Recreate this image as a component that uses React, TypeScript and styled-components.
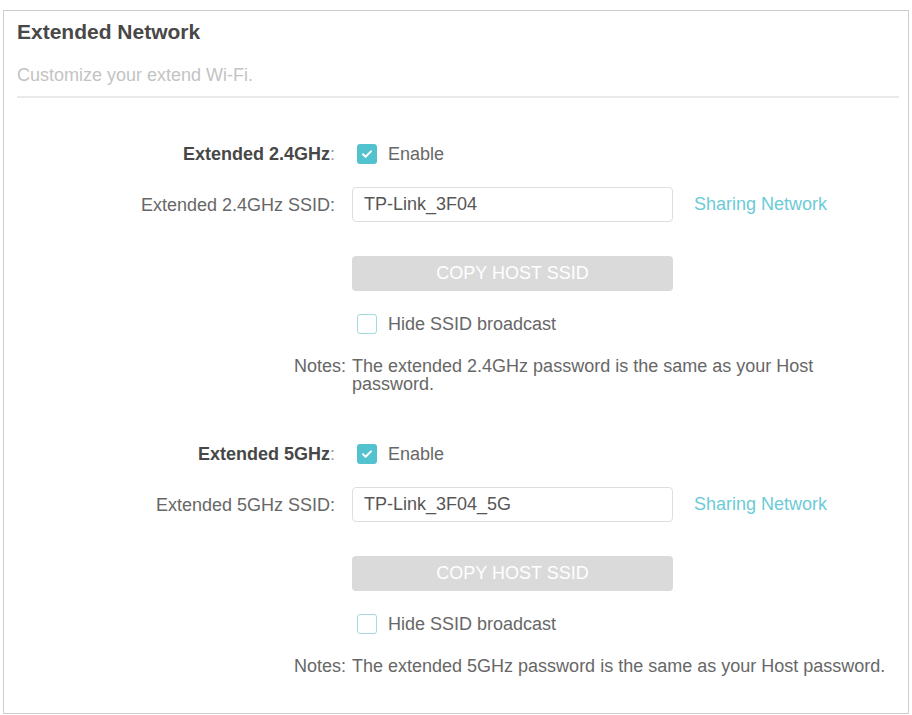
import React from "react";
import styled, { createGlobalStyle } from "styled-components";

const GlobalStyle = createGlobalStyle`
  html, body {
    margin: 0;
    padding: 0;
    background: #fff;
  }
  body {
    font-family: "Liberation Sans", Arial, sans-serif;
  }
`;

const Page = styled.div`
  padding: 10px 4px 1px 3px;
`;

const Panel = styled.section`
  box-sizing: border-box;
  width: 906px;
  height: 704px;
  border: 1px solid #cfcfcf;
  padding: 9px 9px 0 13px;
  background: #fff;
`;

const Title = styled.h1`
  margin: 0;
  font-size: 21px;
  line-height: 24px;
  font-weight: 700;
  color: #484848;
`;

const Subtitle = styled.p`
  margin: 20px 0 0;
  font-size: 18px;
  line-height: 22px;
  color: #c3c3c3;
`;

const Divider = styled.hr`
  margin: 10px 0 0;
  height: 2px;
  border: none;
  background: #e9e9e9;
`;

const Section = styled.div`
  display: flex;
  flex-direction: column;
`;

const Row = styled.div<{ $top: number; $start?: boolean }>`
  display: grid;
  grid-template-columns: 318px 1fr;
  column-gap: 17px;
  align-items: ${(p) => (p.$start ? "start" : "center")};
  margin-top: ${(p) => p.$top}px;
`;

const Label = styled.div<{ $bold?: boolean; $shift?: number }>`
  text-align: right;
  font-size: 18px;
  line-height: 18px;
  color: ${(p) => (p.$bold ? "#474747" : "#676767")};
  font-weight: ${(p) => (p.$bold ? 700 : 400)};
  margin-right: ${(p) => -(p.$shift ?? 0)}px;

  & span {
    font-weight: 400;
    color: #9a9a9a;
  }
`;

const Control = styled.div`
  display: flex;
  align-items: center;
`;

const Box = styled.span<{ $checked?: boolean }>`
  box-sizing: border-box;
  display: inline-flex;
  align-items: center;
  justify-content: center;
  width: 20px;
  height: 20px;
  margin-left: 5px;
  border-radius: 3px;
  background: ${(p) => (p.$checked ? "#52c2cf" : "#fff")};
  border: ${(p) => (p.$checked ? "none" : "1.5px solid #a3d9df")};
`;

const OptionText = styled.span`
  margin-left: 11px;
  font-size: 18px;
  line-height: 20px;
  color: #676767;
`;

const TextInput = styled.input`
  box-sizing: border-box;
  width: 321px;
  height: 35px;
  margin: 0;
  padding: 0 11px;
  border: 1px solid #dedede;
  border-radius: 4px;
  font-family: inherit;
  font-size: 18px;
  color: #565656;
  background: #fff;
  outline: none;
`;

const LinkText = styled.a`
  margin-left: 21px;
  font-size: 18px;
  color: #6ccbd6;
  text-decoration: none;
  cursor: pointer;
`;

const CopyButton = styled.button`
  width: 321px;
  height: 35px;
  border: none;
  border-radius: 4px;
  background: #dadada;
  color: #fff;
  font-family: inherit;
  font-size: 18px;
  cursor: default;
`;

const NoteText = styled.p`
  margin: 0;
  max-width: 540px;
  font-size: 18px;
  line-height: 18px;
  color: #676767;
`;

function Checkbox({ checked }: { checked?: boolean }) {
  return (
    <Box $checked={checked}>
      {checked && (
        <svg width="14" height="14" viewBox="0 0 14 14">
          <path
            d="M3 7.3l2.6 2.5L11 4.4"
            fill="none"
            stroke="#fff"
            strokeWidth="2"
            strokeLinecap="round"
            strokeLinejoin="round"
          />
        </svg>
      )}
    </Box>
  );
}

type BandProps = {
  band: string;
  ssid: string;
  note: string;
  top: number;
};

function BandSection({ band, ssid, note, top }: BandProps) {
  return (
    <Section>
      <Row $top={top}>
        <Label $bold>
          Extended {band}
          <span>:</span>
        </Label>
        <Control>
          <Checkbox checked />
          <OptionText>Enable</OptionText>
        </Control>
      </Row>
      <Row $top={23}>
        <Label>Extended {band} SSID:</Label>
        <Control>
          <TextInput defaultValue={ssid} readOnly />
          <LinkText>Sharing Network</LinkText>
        </Control>
      </Row>
      <Row $top={34}>
        <div />
        <Control>
          <CopyButton>COPY HOST SSID</CopyButton>
        </Control>
      </Row>
      <Row $top={23}>
        <div />
        <Control>
          <Checkbox />
          <OptionText>Hide SSID broadcast</OptionText>
        </Control>
      </Row>
      <Row $top={23} $start>
        <Label $shift={11}>Notes:</Label>
        <NoteText>{note}</NoteText>
      </Row>
    </Section>
  );
}

export default function App() {
  return (
    <>
      <GlobalStyle />
      <Page>
        <Panel>
          <Title>Extended Network</Title>
          <Subtitle>Customize your extend Wi-Fi.</Subtitle>
          <Divider />
          <BandSection
            band="2.4GHz"
            ssid="TP-Link_3F04"
            note="The extended 2.4GHz password is the same as your Host password."
            top={46}
          />
          <BandSection
            band="5GHz"
            ssid="TP-Link_3F04_5G"
            note="The extended 5GHz password is the same as your Host password."
            top={51}
          />
        </Panel>
      </Page>
    </>
  );
}
